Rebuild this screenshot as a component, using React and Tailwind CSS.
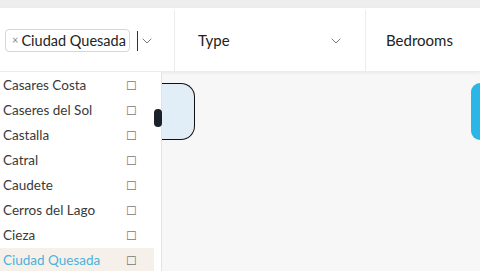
import { ChevronDown } from "lucide-react";

const towns = [
  "Casares Costa",
  "Caseres del Sol",
  "Castalla",
  "Catral",
  "Caudete",
  "Cerros del Lago",
  "Cieza",
  "Ciudad Quesada",
];

export default function App() {
  return (
    <div className="relative w-[480px] h-[271px] overflow-hidden bg-[#f7f7f7] font-['Lato','Noto_Sans',sans-serif] text-[#333]">
      <div className="h-[8px] bg-[#eeeeee]" />
      <div className="flex h-[64px] bg-white border-b border-[#ececec] pt-[2px] shadow-[0_1px_3px_rgba(0,0,0,0.06)]">
        <div className="flex w-[175px] items-center border-r border-[#ececec] pl-[5px]">
          <div className="flex h-[23px] items-center gap-[3px] rounded-[4px] border border-[#d6d6d6] pl-[6px] pr-[3px] text-[14.5px] text-[#222]">
            <span className="text-[11px] text-[#888]">×</span>
            <span>Ciudad Quesada</span>
          </div>
          <div className="ml-[7px] h-[20px] w-px bg-[#333]" />
          <ChevronDown className="ml-px h-[16px] w-[16px] text-[#666]" strokeWidth={1.3} />
        </div>
        <div className="flex w-[191px] items-center justify-between border-r border-[#ececec] pl-[23px] pr-[21px] text-[15px] text-[#222]">
          <span>Type</span>
          <ChevronDown className="h-[16px] w-[16px] text-[#666]" strokeWidth={1.3} />
        </div>
        <div className="flex flex-1 items-center pl-[20px] text-[15px] text-[#222]">
          <span>Bedrooms</span>
        </div>
      </div>

      <div className="flex items-start justify-between pt-[11px]">
        <div className="relative ml-[160px] h-[57px] w-[35px] rounded-r-[14px] border border-l-0 border-[#111] bg-[#e1eef7]">
          <div className="absolute left-[-6px] top-[25px] z-10 h-[18px] w-[8px] rounded-full bg-[#1b2128]" />
        </div>
        <div className="h-[57px] w-[9px] rounded-l-[9px] bg-[#2cb6e8]" />
      </div>

      <div className="absolute left-0 top-[72px] bottom-0 w-[162px] border-r border-[#e3e3e3] bg-white pt-px">
        {towns.map((t, i) => {
          const active = i === towns.length - 1;
          return (
            <div
              key={t}
              className={
                active
                  ? "flex h-[25px] w-[154px] items-center justify-between bg-[#f6f0eb] pl-[3px] pr-[17px] text-[13.5px] text-[#49b3dc]"
                  : "flex h-[25px] w-[154px] items-center justify-between pl-[3px] pr-[17px] text-[13.5px] text-[#3a3a3a]"
              }
            >
              <span>{t}</span>
              <span className="text-[12px] text-[#777]">☐</span>
            </div>
          );
        })}
      </div>
    </div>
  );
}
